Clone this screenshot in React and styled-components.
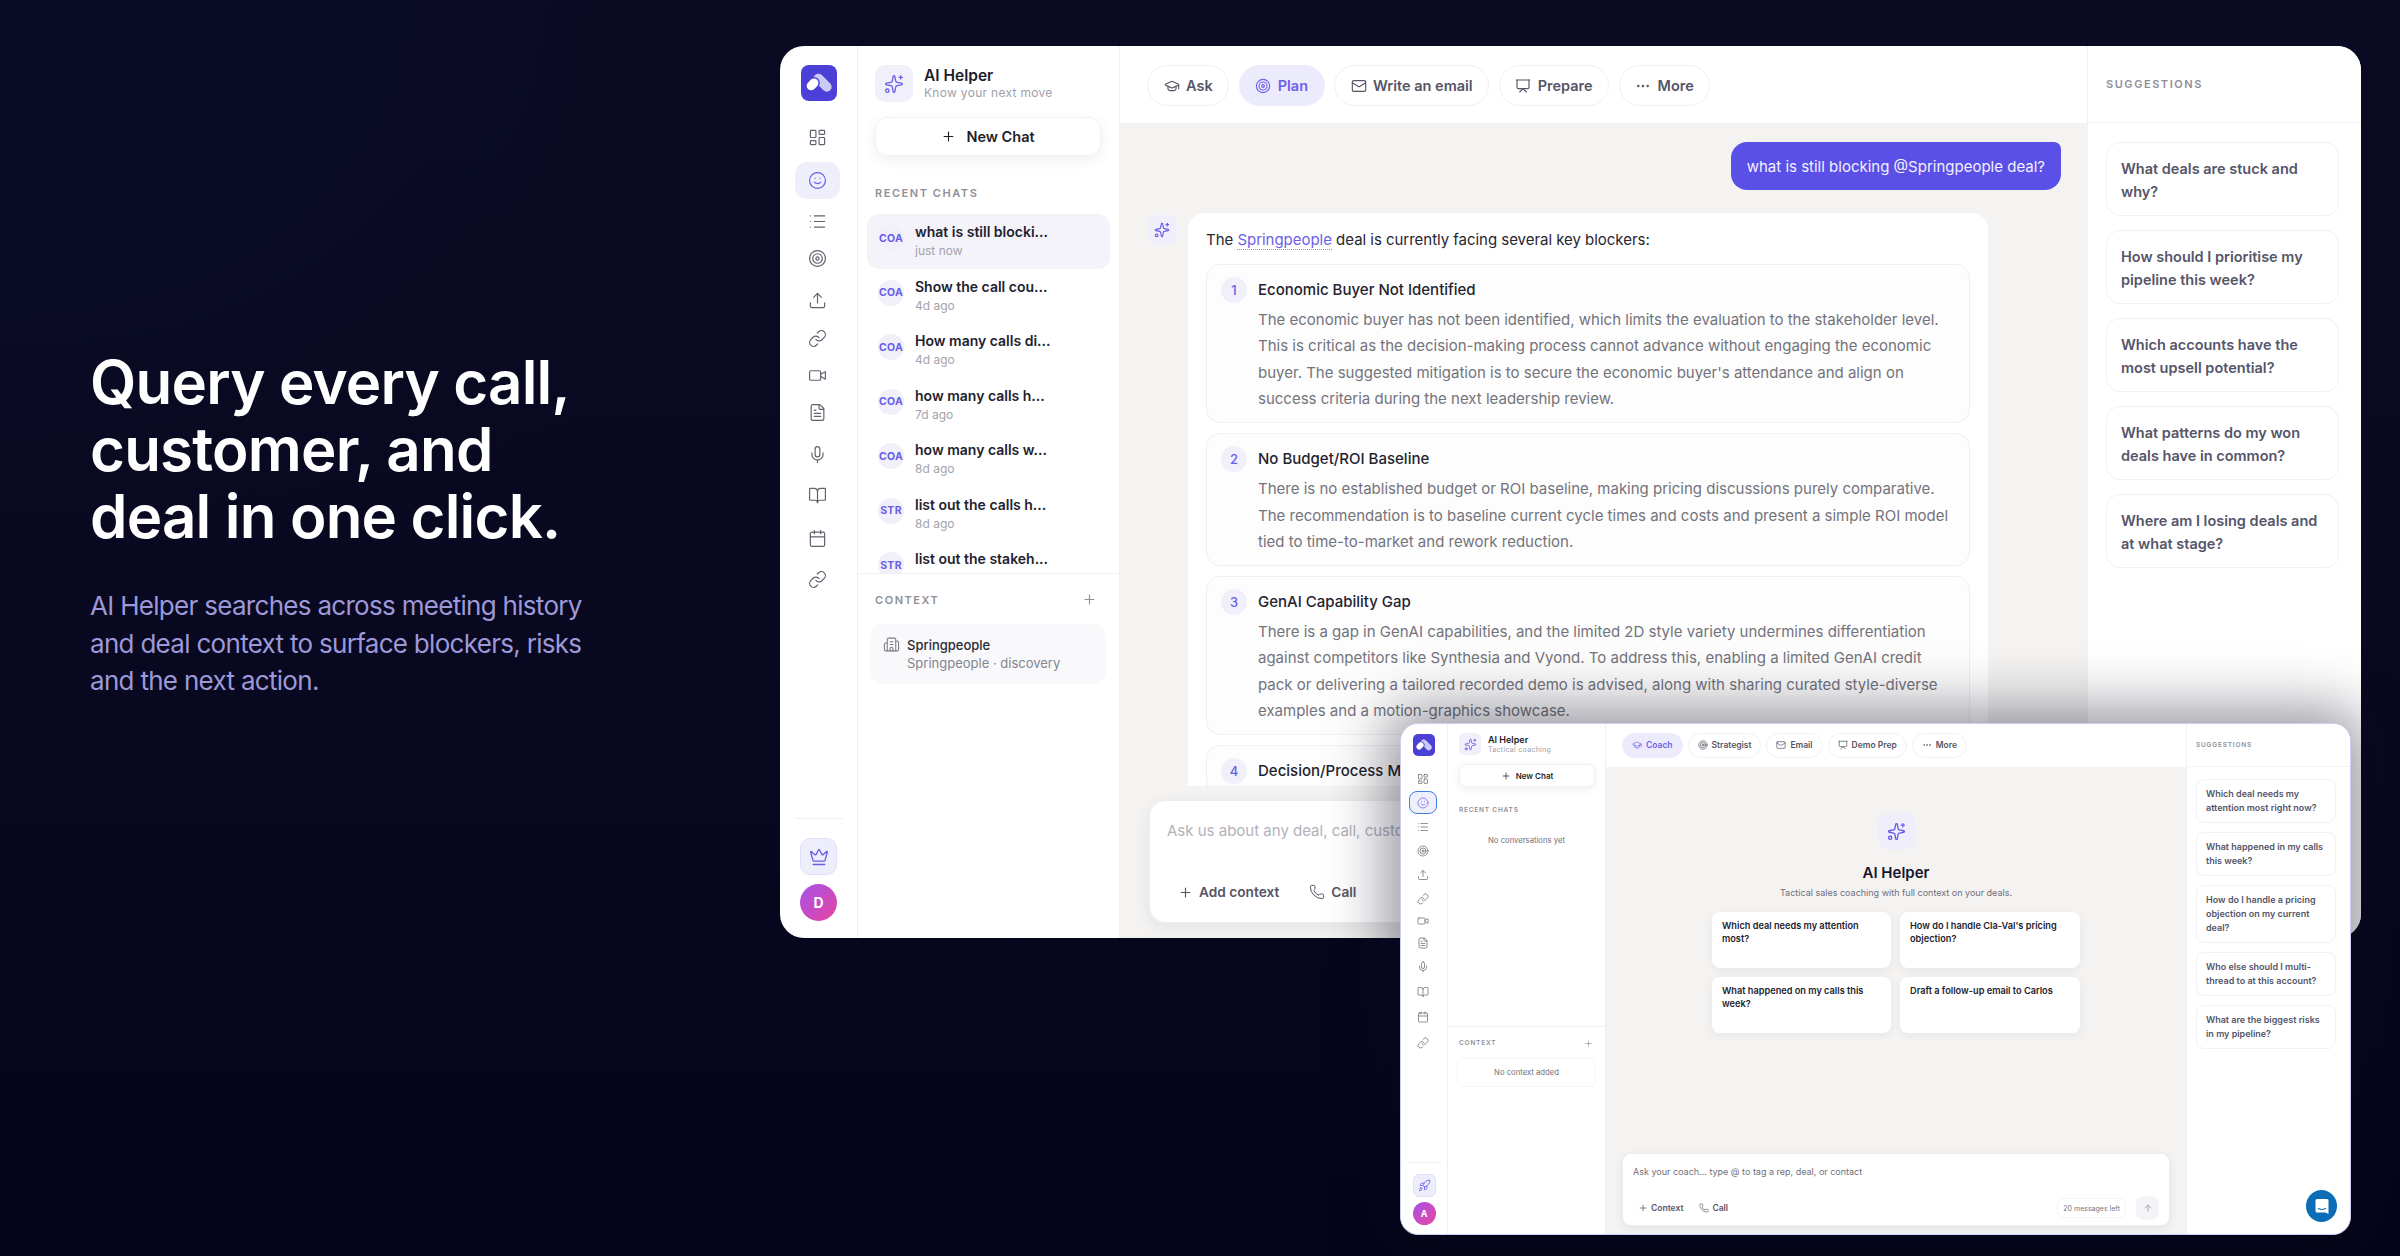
import React from "react";
import styled, { createGlobalStyle } from "styled-components";
import {
  LayoutDashboard, Smile, List, Target, Upload, Link, Video, FileText, Mic, BookOpen, Calendar,
  Crown, Plus, Sparkles, GraduationCap, Mail, Presentation, Ellipsis, Building2, Phone, Rocket, ArrowUp,
} from "lucide-react";

const GlobalStyle = createGlobalStyle`
  html, body { margin: 0; padding: 0; background: #07071c; }
  * { box-sizing: border-box; }
  body { font-family: Inter, "Liberation Sans", sans-serif; }
`;

const Stage = styled.div`
  position: relative;
  width: 2400px;
  height: 1256px;
  overflow: hidden;
  display: flex;
  align-items: flex-start;
  padding: 46px 39px 0 90px;
  background:
    radial-gradient(800px 600px at 0% 0%, #0b0d27 0%, rgba(11, 13, 39, 0) 100%),
    linear-gradient(180deg, #0a0a22 0%, #080820 55%, #04041a 100%);
`;

const Hero = styled.section`
  width: 690px;
  flex: none;
  padding-top: 303px;
`;

const Headline = styled.h1`
  margin: 0;
  font-family: Inter, sans-serif;
  font-size: 60px;
  line-height: 67px;
  font-weight: 600;
  letter-spacing: -0.8px;
  color: #fff;
`;

const Lede = styled.p`
  margin: 37px 0 0;
  font-size: 26px;
  line-height: 37.5px;
  letter-spacing: -0.7px;
  color: #9d98d8;
`;

const BigWindow = styled.div`
  width: 1581px;
  height: 892px;
  flex: none;
  display: flex;
  background: #fff;
  border-radius: 24px;
  overflow: hidden;
`;

const Rail = styled.nav`
  width: ${(p) => (p.$mini ? 47 : 78)}px;
  flex: none;
  display: flex;
  flex-direction: column;
  align-items: center;
  padding-top: ${(p) => (p.$mini ? 10 : 19)}px;
  padding-bottom: ${(p) => (p.$mini ? 9 : 17)}px;
  border-right: 1px solid #f0f0f3;
`;

const Logo = styled.div`
  width: ${(p) => (p.$mini ? 22 : 36)}px;
  height: ${(p) => (p.$mini ? 22 : 36)}px;
  flex: none;
  border-radius: ${(p) => (p.$mini ? 5 : 8)}px;
  background: #4a3fd6;
  display: flex;
  align-items: center;
  justify-content: center;
  margin-bottom: ${(p) => (p.$mini ? 10 : 18)}px;
  svg { width: 100%; height: 100%; }
`;

const RailItem = styled.div`
  width: ${(p) => (p.$mini ? 28 : 45)}px;
  height: ${(p) => (p.$mini ? p.$h : 37)}px;
  flex: none;
  margin-left: ${(p) => (p.$mini ? -3 : -2)}px;
  margin-top: ${(p) => p.$gap || 0}px;
  display: flex;
  align-items: center;
  justify-content: center;
  color: ${(p) => (p.$active ? "#6a5ee8" : "#62626f")};
  background: ${(p) => (p.$active ? "#efeefb" : "transparent")};
  border-radius: ${(p) => (p.$mini ? 8 : 12)}px;
  border: ${(p) => (p.$active && p.$mini ? "1.5px solid #3f7fe0" : "none")};
`;

const RailFoot = styled.div`
  margin-top: auto;
  width: ${(p) => (p.$mini ? 36 : 48)}px;
  border-top: 1px solid #f0f0f3;
  padding-top: ${(p) => (p.$mini ? 11 : 19)}px;
  display: flex;
  flex-direction: column;
  align-items: center;
  gap: ${(p) => (p.$mini ? 5 : 9)}px;
`;

const RailBadge = styled.div`
  width: ${(p) => (p.$mini ? 23 : 37)}px;
  height: ${(p) => (p.$mini ? 23 : 37)}px;
  border-radius: ${(p) => (p.$mini ? 6 : 10)}px;
  background: #eeedfb;
  border: 1px solid #e2e0f6;
  color: #6a5ee8;
  display: flex;
  align-items: center;
  justify-content: center;
`;

const Avatar = styled.div`
  width: ${(p) => (p.$mini ? 23 : 37)}px;
  height: ${(p) => (p.$mini ? 23 : 37)}px;
  border-radius: 50%;
  background: linear-gradient(135deg, #a552e8, #e845a0);
  color: #fff;
  font-size: ${(p) => (p.$mini ? 9 : 14)}px;
  font-weight: 700;
  display: flex;
  align-items: center;
  justify-content: center;
`;

const ChatPanel = styled.aside`
  width: ${(p) => (p.$mini ? 158 : 262)}px;
  flex: none;
  display: flex;
  flex-direction: column;
  border-right: 1px solid #f0f0f3;
`;

const PanelTop = styled.div`
  padding: ${(p) => (p.$mini ? "9px 11px 0" : "19px 17px 0")};
`;

const Brand = styled.div`
  display: flex;
  align-items: center;
  gap: ${(p) => (p.$mini ? 7 : 11)}px;
`;

const BrandIcon = styled.div`
  width: ${(p) => (p.$mini ? 22 : 38)}px;
  height: ${(p) => (p.$mini ? 22 : 37)}px;
  border-radius: ${(p) => (p.$mini ? 6 : 10)}px;
  background: #f0effa;
  color: #6a5ee8;
  display: flex;
  align-items: center;
  justify-content: center;
`;

const BrandName = styled.div`
  font-size: ${(p) => (p.$mini ? 9 : 15.5)}px;
  line-height: ${(p) => (p.$mini ? 11 : 19)}px;
  font-weight: 600;
  color: #1c1c2a;
`;

const BrandSub = styled.div`
  font-size: ${(p) => (p.$mini ? 7 : 12)}px;
  line-height: ${(p) => (p.$mini ? 10 : 16)}px;
  letter-spacing: 0.3px;
  color: #a0a0aa;
`;

const NewChat = styled.div`
  height: ${(p) => (p.$mini ? 23 : 39)}px;
  width: ${(p) => (p.$mini ? 136 : 226)}px;
  margin-top: ${(p) => (p.$mini ? 9 : 15)}px;
  display: flex;
  align-items: center;
  justify-content: center;
  gap: ${(p) => (p.$mini ? 5 : 10)}px;
  background: #fff;
  border: 1px solid #f1f1f4;
  border-radius: ${(p) => (p.$mini ? 7 : 12)}px;
  box-shadow: 0 ${(p) => (p.$mini ? 2 : 4)}px ${(p) => (p.$mini ? 8 : 14)}px rgba(30, 30, 60, 0.07);
  font-size: ${(p) => (p.$mini ? 8 : 14.5)}px;
  font-weight: 600;
  color: #1f1f2c;
`;

const SectionLabel = styled.div`
  font-size: ${(p) => (p.$mini ? 6.5 : 11)}px;
  line-height: ${(p) => (p.$mini ? 10 : 14)}px;
  font-weight: 600;
  letter-spacing: ${(p) => (p.$mini ? 0.8 : 1.55)}px;
  color: #8f8f9a;
  text-transform: uppercase;
`;

const RecentLabel = styled(SectionLabel)`
  margin: ${(p) => (p.$mini ? "18px 11px 0" : "30px 17px 0")};
`;

const ChatList = styled.div`
  flex: 1;
  min-height: 0;
  overflow: hidden;
  margin-top: 14px;
  padding: 0 9px;
`;

const ChatRow = styled.div`
  height: 54.5px;
  display: flex;
  align-items: center;
  gap: 11px;
  padding: 0 4px 0 11px;
  border-radius: 12px;
  background: ${(p) => (p.$active ? "#f4f3fa" : "transparent")};
`;

const ChatBadge = styled.div`
  width: 26px;
  height: 26px;
  flex: none;
  margin-top: -6px;
  border-radius: 50%;
  background: #f0effa;
  color: #6a5ee8;
  font-size: 10.5px;
  font-weight: 700;
  letter-spacing: 0.3px;
  display: flex;
  align-items: center;
  justify-content: center;
`;

const ChatTitle = styled.div`
  font-size: 14px;
  line-height: 20px;
  font-weight: 600;
  color: #22222f;
  white-space: nowrap;
`;

const ChatTime = styled.div`
  font-size: 12px;
  line-height: 18px;
  color: #a3a3ad;
`;

const ContextBox = styled.div`
  height: ${(p) => (p.$mini ? 208 : 365)}px;
  flex: none;
  border-top: 1px solid #f0f0f3;
  padding: ${(p) => (p.$mini ? "11px 9px 0" : "18px 13px 0")};
`;

const ContextHead = styled.div`
  display: flex;
  align-items: center;
  justify-content: space-between;
  padding: ${(p) => (p.$mini ? "0 3px 0 2px" : "0 9px 0 4px")};
  color: #8f8f9a;
`;

const ContextCard = styled.div`
  width: 236px;
  height: 60px;
  margin-top: 17px;
  margin-left: -1px;
  display: flex;
  align-items: flex-start;
  gap: 7px;
  padding: 12px 13px 0;
  border-radius: 12px;
  background: #f9f9fb;
  color: #7d7d88;
`;

const ContextName = styled.div`
  font-size: 13px;
  line-height: 18px;
  font-weight: 500;
  color: #2a2a36;
`;

const ContextMeta = styled.div`
  font-size: 13px;
  line-height: 18px;
  color: #84848e;
`;

const EmptyNote = styled.div`
  text-align: center;
  font-size: 7.7px;
  color: #6f6f7a;
`;

const ConversationsEmpty = styled(EmptyNote)`
  flex: 1;
  padding-top: 21px;
`;

const ContextEmpty = styled(EmptyNote)`
  margin-top: 10px;
  height: 29px;
  line-height: 27px;
  border: 1px solid #f5f5f7;
  border-radius: 6px;
`;

const Main = styled.main`
  flex: 1;
  min-width: 0;
  display: flex;
  flex-direction: column;
  background: #f4f3f2;
  position: relative;
`;

const TopBar = styled.div`
  height: ${(p) => (p.$mini ? 43 : 77)}px;
  flex: none;
  background: #fff;
  display: flex;
  align-items: flex-start;
  gap: ${(p) => (p.$mini ? 5 : 9.5)}px;
  padding: ${(p) => (p.$mini ? "8.5px 16px 0" : "19px 27px 0")};
`;

const Chip = styled.div`
  height: ${(p) => (p.$mini ? 25 : 41)}px;
  display: flex;
  align-items: center;
  gap: ${(p) => (p.$mini ? 4 : 6.5)}px;
  padding: 0 ${(p) => (p.$mini ? 9 : 15.5)}px;
  border-radius: 999px;
  border: 1px solid ${(p) => (p.$active ? "#ecebfb" : "#f0f0f3")};
  background: ${(p) => (p.$active ? "#ecebfb" : "#fff")};
  color: ${(p) => (p.$active ? "#6d60e8" : "#555566")};
  font-size: ${(p) => (p.$mini ? 8.5 : 14.5)}px;
  font-weight: 600;
  white-space: nowrap;
`;

const Thread = styled.div`
  flex: 1;
  min-height: 0;
  overflow: hidden;
  display: flex;
  flex-direction: column;
  padding: 19px 27px 0;
`;

const UserBubble = styled.div`
  align-self: flex-end;
  margin-right: -1px;
  height: 48px;
  padding: 0 16px;
  display: flex;
  align-items: center;
  border-radius: 16px 7px 16px 16px;
  background: #5a4fe6;
  color: #f2f1ff;
  font-size: 15px;
`;

const AnswerRow = styled.div`
  display: flex;
  gap: 11px;
  margin-top: 23px;
`;

const AnswerIcon = styled.div`
  width: 30px;
  height: 30px;
  flex: none;
  margin-top: 2px;
  border-radius: 9px;
  background: #efeefa;
  color: #6a5ee8;
  display: flex;
  align-items: center;
  justify-content: center;
`;

const AnswerCard = styled.div`
  width: 800px;
  background: #fff;
  border-radius: 16px 16px 0 0;
  padding: 17px 18px 0;
`;

const Intro = styled.div`
  font-size: 15px;
  line-height: 20px;
  letter-spacing: -0.03px;
  color: #26262f;
`;

const Mention = styled.span`
  color: #6d60e8;
  border-bottom: 1.5px dotted #8d84ee;
`;

const Blocker = styled.div`
  display: flex;
  gap: 11px;
  margin-top: ${(p) => (p.$first ? 14 : 10)}px;
  padding: 12px 14px 9.5px;
  border: 1px solid #efeff1;
  border-radius: 14px;
  background: #fdfdfd;
`;

const BlockerNum = styled.div`
  width: 26px;
  height: 26px;
  flex: none;
  border-radius: 50%;
  background: #f0effa;
  color: #6a5ee8;
  font-size: 13px;
  font-weight: 500;
  display: flex;
  align-items: center;
  justify-content: center;
`;

const BlockerTitle = styled.div`
  font-size: 15px;
  line-height: 26px;
  font-weight: 500;
  color: #23232e;
  white-space: nowrap;
`;

const BlockerText = styled.div`
  margin-top: 4px;
  font-size: 15px;
  line-height: 26.4px;
  color: #73737c;
  white-space: pre-line;
`;

const ComposerDock = styled.div`
  position: absolute;
  left: 0;
  right: 0;
  bottom: 0;
  height: 152px;
  padding: 14px 0 0 29px;
  background: #f4f3f2;
`;

const Composer = styled.div`
  width: ${(p) => (p.$mini ? 548 : 880)}px;
  height: ${(p) => (p.$mini ? 73 : 123)}px;
  display: flex;
  flex-direction: column;
  background: #fff;
  border-radius: ${(p) => (p.$mini ? 9 : 16)}px;
  border: 1px solid #ededf0;
  box-shadow: 0 ${(p) => (p.$mini ? 3 : 5)}px ${(p) => (p.$mini ? 10 : 18)}px rgba(30, 30, 50, 0.07);
  padding: ${(p) => (p.$mini ? "11px 10px 5px" : "20px 17px 18px")};
`;

const Placeholder = styled.div`
  flex: 1;
  font-size: ${(p) => (p.$mini ? 9 : 15)}px;
  line-height: ${(p) => (p.$mini ? 13 : 20)}px;
  color: ${(p) => (p.$mini ? "#6f6f7a" : "#b2b2ba")};
  white-space: nowrap;
`;

const ComposerBar = styled.div`
  display: flex;
  align-items: center;
  gap: ${(p) => (p.$mini ? 16 : 30)}px;
  padding-left: ${(p) => (p.$mini ? 5 : 11)}px;
`;

const ToolButton = styled.div`
  display: flex;
  align-items: center;
  gap: ${(p) => (p.$mini ? 3 : 6)}px;
  font-size: ${(p) => (p.$mini ? 8.5 : 13.7)}px;
  line-height: ${(p) => (p.$mini ? 12 : 24)}px;
  font-weight: 600;
  color: #555566;
`;

const MessagesLeft = styled.div`
  margin-left: auto;
  margin-right: -6px;
  height: 20px;
  padding: 0 5px;
  display: flex;
  align-items: center;
  border: 1px solid #f5f5f7;
  border-radius: 6px;
  font-size: 7px;
  color: #77777f;
`;

const SendButton = styled.div`
  width: 23px;
  height: 24px;
  border-radius: 8px;
  background: #f3f3f8;
  color: #8b8b96;
  display: flex;
  align-items: center;
  justify-content: center;
`;

const SuggestPanel = styled.aside`
  width: ${(p) => (p.$mini ? 164 : 274)}px;
  flex: none;
  background: #fff;
  border-left: 1px solid #f0f0f3;
  display: flex;
  flex-direction: column;
  position: relative;
`;

const SuggestHead = styled.div`
  height: ${(p) => (p.$mini ? 43 : 77)}px;
  flex: none;
  display: flex;
  align-items: center;
  padding-left: ${(p) => (p.$mini ? 9 : 18)}px;
  border-bottom: 1px solid #f3f3f5;
`;

const SuggestList = styled.div`
  display: flex;
  flex-direction: column;
  gap: ${(p) => (p.$mini ? 9 : 14)}px;
  padding: ${(p) => (p.$mini ? "12px 14px 0 9px" : "19px 22px 0 18px")};
`;

const SuggestCard = styled.div`
  padding: ${(p) => (p.$mini ? "7px 9px" : "13.5px 14px 12.5px")};
  border: 1px solid #f1f1f4;
  border-radius: ${(p) => (p.$mini ? 8 : 14)}px;
  font-size: ${(p) => (p.$mini ? 9 : 14.5)}px;
  line-height: ${(p) => (p.$mini ? 14 : 23)}px;
  font-weight: 600;
  color: #55556a;
`;

const MiniWindow = styled.div`
  position: absolute;
  left: 1400px;
  top: 723px;
  width: 951px;
  height: 512px;
  display: flex;
  background: #fff;
  border: 1px solid #cfcdf3;
  border-radius: 18px;
  overflow: hidden;
  box-shadow: 0 0 60px 12px rgba(10, 10, 30, 0.46);
`;

const WelcomeArea = styled.div`
  flex: 1;
  min-height: 0;
  display: flex;
  flex-direction: column;
  align-items: center;
  padding-top: 46px;
`;

const WelcomeIcon = styled.div`
  width: 37px;
  height: 37px;
  border-radius: 9px;
  background: #efeefa;
  color: #6a5ee8;
  display: flex;
  align-items: center;
  justify-content: center;
`;

const WelcomeTitle = styled.div`
  margin-top: 13px;
  font-size: 15px;
  line-height: 20px;
  font-weight: 600;
  color: #16162a;
`;

const WelcomeSub = styled.div`
  margin-top: 3px;
  font-size: 9px;
  line-height: 14px;
  color: #6f6f7a;
`;

const PromptGrid = styled.div`
  margin-top: 12px;
  display: grid;
  grid-template-columns: 179px 180px;
  grid-auto-rows: 56px;
  gap: 9px;
`;

const PromptCard = styled.div`
  padding: 8px 10px;
  background: #fff;
  border-radius: 8px;
  box-shadow: 0 3px 10px rgba(30, 30, 50, 0.06);
  font-size: 9.2px;
  line-height: 12.5px;
  font-weight: 600;
  color: #22222f;
`;

const MiniDock = styled.div`
  flex: none;
  padding: 0 0 8px 16px;
`;

const HelpBubble = styled.div`
  position: absolute;
  right: 13px;
  bottom: 12px;
  width: 31px;
  height: 32px;
  border-radius: 50%;
  background: #0a6db5;
  display: flex;
  align-items: center;
  justify-content: center;
`;

function LogoMark() {
  return (
    <svg viewBox="0 0 32 32">
      <path d="M15.5 12 L23 19.5" fill="none" stroke="#fff" strokeOpacity="0.72" strokeWidth="8.5" strokeLinecap="round" />
      <path d="M9 18.5 L11.5 16" fill="none" stroke="#4a3fd6" strokeWidth="10.5" strokeLinecap="round" />
      <path d="M9 18.5 L11.5 16" fill="none" stroke="#fff" strokeWidth="8" strokeLinecap="round" />
    </svg>
  );
}

// [icon, space above it, height in the small window]
const railIcons = [
  [LayoutDashboard, 0, 25],
  [Smile, 5.5, 23],
  [List, 4, 25],
  [Target, 0, 23],
  [Upload, 5, 25],
  [Link, 1, 23],
  [Video, 0, 22],
  [FileText, 0, 22],
  [Mic, 5, 25],
  [BookOpen, 4, 25],
  [Calendar, 6, 26],
  [Link, 4, 25],
];

function NavRail({ mini, footIcon: FootIcon, letter }) {
  return (
    <Rail $mini={mini}>
      <Logo $mini={mini}><LogoMark /></Logo>
      {railIcons.map(([Icon, gap, h], i) => (
        <RailItem key={i} $mini={mini} $active={i === 1} $h={h} $gap={mini ? 0 : gap}>
          <Icon size={mini ? 12 : 19} strokeWidth={mini ? 1.4 : 1.5} />
        </RailItem>
      ))}
      <RailFoot $mini={mini}>
        <RailBadge $mini={mini}><FootIcon size={mini ? 13 : 20} strokeWidth={1.6} /></RailBadge>
        <Avatar $mini={mini}>{letter}</Avatar>
      </RailFoot>
    </Rail>
  );
}

function PanelHeader({ mini, sub }) {
  return (
    <PanelTop $mini={mini}>
      <Brand $mini={mini}>
        <BrandIcon $mini={mini}><Sparkles size={mini ? 13 : 20} strokeWidth={1.6} /></BrandIcon>
        <div>
          <BrandName $mini={mini}>AI Helper</BrandName>
          <BrandSub $mini={mini}>{sub}</BrandSub>
        </div>
      </Brand>
      <NewChat $mini={mini}><Plus size={mini ? 10 : 15} strokeWidth={1.8} />New Chat</NewChat>
    </PanelTop>
  );
}

const recentChats = [
  ["COA", "what is still blocki...", "just now"],
  ["COA", "Show the call cou...", "4d ago"],
  ["COA", "How many calls di...", "4d ago"],
  ["COA", "how many calls h...", "7d ago"],
  ["COA", "how many calls w...", "8d ago"],
  ["STR", "list out the calls h...", "8d ago"],
  ["STR", "list out the stakeh...", ""],
];

const tabs = [
  [GraduationCap, "Ask"],
  [Target, "Plan"],
  [Mail, "Write an email"],
  [Presentation, "Prepare"],
  [Ellipsis, "More"],
];

const miniTabs = [
  [GraduationCap, "Coach"],
  [Target, "Strategist"],
  [Mail, "Email"],
  [Presentation, "Demo Prep"],
  [Ellipsis, "More"],
];

const blockers = [
  ["Economic Buyer Not Identified", "The economic buyer has not been identified, which limits the evaluation to the stakeholder level.\nThis is critical as the decision-making process cannot advance without engaging the economic\nbuyer. The suggested mitigation is to secure the economic buyer's attendance and align on\nsuccess criteria during the next leadership review."],
  ["No Budget/ROI Baseline", "There is no established budget or ROI baseline, making pricing discussions purely comparative.\nThe recommendation is to baseline current cycle times and costs and present a simple ROI model\ntied to time-to-market and rework reduction."],
  ["GenAI Capability Gap", "There is a gap in GenAI capabilities, and the limited 2D style variety undermines differentiation\nagainst competitors like Synthesia and Vyond. To address this, enabling a limited GenAI credit\npack or delivering a tailored recorded demo is advised, along with sharing curated style-diverse\nexamples and a motion-graphics showcase."],
  ["Decision/Process Mapping", ""],
];

const suggestions = [
  "What deals are stuck and why?",
  "How should I prioritise my pipeline this week?",
  "Which accounts have the most upsell potential?",
  "What patterns do my won deals have in common?",
  "Where am I losing deals and at what stage?",
];

const miniSuggestions = [
  "Which deal needs my attention most right now?",
  "What happened in my calls this week?",
  "How do I handle a pricing objection on my current deal?",
  "Who else should I multi-thread to at this account?",
  "What are the biggest risks in my pipeline?",
];

const prompts = [
  "Which deal needs my attention most?",
  "How do I handle Cla-Val's pricing objection?",
  "What happened on my calls this week?",
  "Draft a follow-up email to Carlos",
];

export default function App() {
  return (
    <>
      <GlobalStyle />
      <Stage>
        <Hero>
          <Headline>Query every call,<br />customer, and<br />deal in one click.</Headline>
          <Lede>AI Helper searches across meeting history<br />and deal context to surface blockers, risks<br />and the next action.</Lede>
        </Hero>

        <BigWindow>
          <NavRail footIcon={Crown} letter="D" />
          <ChatPanel>
            <PanelHeader sub="Know your next move" />
            <RecentLabel>Recent chats</RecentLabel>
            <ChatList>
              {recentChats.map(([tag, title, time], i) => (
                <ChatRow key={i} $active={i === 0}>
                  <ChatBadge>{tag}</ChatBadge>
                  <div>
                    <ChatTitle>{title}</ChatTitle>
                    <ChatTime>{time || "\u00a0"}</ChatTime>
                  </div>
                </ChatRow>
              ))}
            </ChatList>
            <ContextBox>
              <ContextHead>
                <SectionLabel>Context</SectionLabel>
                <Plus size={15} strokeWidth={1.8} />
              </ContextHead>
              <ContextCard>
                <Building2 size={17} strokeWidth={1.5} />
                <div>
                  <ContextName>Springpeople</ContextName>
                  <ContextMeta>Springpeople · discovery</ContextMeta>
                </div>
              </ContextCard>
            </ContextBox>
          </ChatPanel>

          <Main>
            <TopBar>
              {tabs.map(([Icon, label], i) => (
                <Chip key={label} $active={i === 1}>
                  <Icon size={16} strokeWidth={1.7} />{label}
                </Chip>
              ))}
            </TopBar>
            <Thread>
              <UserBubble>what is still blocking @Springpeople deal?</UserBubble>
              <AnswerRow>
                <AnswerIcon><Sparkles size={16} strokeWidth={1.7} /></AnswerIcon>
                <AnswerCard>
                  <Intro>The <Mention>Springpeople</Mention> deal is currently facing several key blockers:</Intro>
                  {blockers.map(([title, text], i) => (
                    <Blocker key={title} $first={i === 0}>
                      <BlockerNum>{i + 1}</BlockerNum>
                      <div>
                        <BlockerTitle>{title}</BlockerTitle>
                        {text && <BlockerText>{text}</BlockerText>}
                      </div>
                    </Blocker>
                  ))}
                </AnswerCard>
              </AnswerRow>
            </Thread>
            <ComposerDock>
              <Composer>
                <Placeholder>Ask us about any deal, call, customer, or contact</Placeholder>
                <ComposerBar>
                  <ToolButton><Plus size={15} strokeWidth={1.8} />Add context</ToolButton>
                  <ToolButton><Phone size={16} strokeWidth={1.5} />Call</ToolButton>
                </ComposerBar>
              </Composer>
            </ComposerDock>
          </Main>

          <SuggestPanel>
            <SuggestHead><SectionLabel>Suggestions</SectionLabel></SuggestHead>
            <SuggestList>
              {suggestions.map((s) => <SuggestCard key={s}>{s}</SuggestCard>)}
            </SuggestList>
          </SuggestPanel>
        </BigWindow>

        <MiniWindow>
          <NavRail mini footIcon={Rocket} letter="A" />
          <ChatPanel $mini>
            <PanelHeader mini sub="Tactical coaching" />
            <RecentLabel $mini>Recent chats</RecentLabel>
            <ConversationsEmpty>No conversations yet</ConversationsEmpty>
            <ContextBox $mini>
              <ContextHead $mini>
                <SectionLabel $mini>Context</SectionLabel>
                <Plus size={9} strokeWidth={1.8} />
              </ContextHead>
              <ContextEmpty>No context added</ContextEmpty>
            </ContextBox>
          </ChatPanel>

          <Main>
            <TopBar $mini>
              {miniTabs.map(([Icon, label], i) => (
                <Chip key={label} $mini $active={i === 0}>
                  <Icon size={10} strokeWidth={1.7} />{label}
                </Chip>
              ))}
            </TopBar>
            <WelcomeArea>
              <WelcomeIcon><Sparkles size={19} strokeWidth={1.7} /></WelcomeIcon>
              <WelcomeTitle>AI Helper</WelcomeTitle>
              <WelcomeSub>Tactical sales coaching with full context on your deals.</WelcomeSub>
              <PromptGrid>
                {prompts.map((p) => <PromptCard key={p}>{p}</PromptCard>)}
              </PromptGrid>
            </WelcomeArea>
            <MiniDock>
              <Composer $mini>
                <Placeholder $mini>Ask your coach... type @ to tag a rep, deal, or contact</Placeholder>
                <ComposerBar $mini>
                  <ToolButton $mini><Plus size={10} strokeWidth={1.8} />Context</ToolButton>
                  <ToolButton $mini><Phone size={10} strokeWidth={1.5} />Call</ToolButton>
                  <MessagesLeft>20 messages left</MessagesLeft>
                  <SendButton><ArrowUp size={10} strokeWidth={1.8} /></SendButton>
                </ComposerBar>
              </Composer>
            </MiniDock>
          </Main>

          <SuggestPanel $mini>
            <SuggestHead $mini><SectionLabel $mini>Suggestions</SectionLabel></SuggestHead>
            <SuggestList $mini>
              {miniSuggestions.map((s) => <SuggestCard key={s} $mini>{s}</SuggestCard>)}
            </SuggestList>
            <HelpBubble>
              <svg width="16" height="17" viewBox="0 0 16 17">
                <path d="M3 1h10a1.5 1.5 0 0 1 1.5 1.5V16l-3-1.5H3A1.5 1.5 0 0 1 1.5 13V2.5A1.5 1.5 0 0 1 3 1z" fill="#fff" />
                <path d="M4.5 10.5q3.5 2 7 0" fill="none" stroke="#0a6db5" strokeWidth="1.2" strokeLinecap="round" />
              </svg>
            </HelpBubble>
          </SuggestPanel>
        </MiniWindow>
      </Stage>
    </>
  );
}
